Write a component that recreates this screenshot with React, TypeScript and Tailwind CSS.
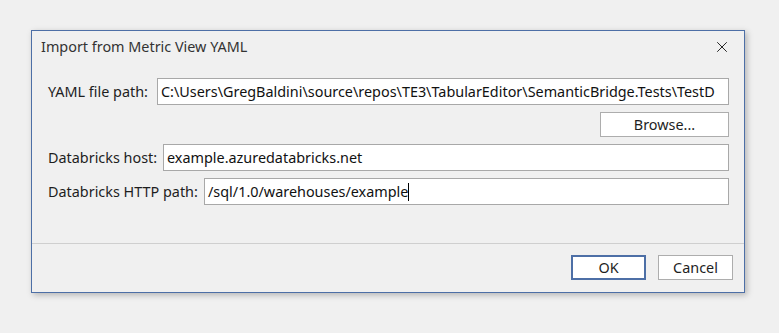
import { X } from 'lucide-react'

const font = { fontFamily: '"Noto Sans", "Open Sans", Arial, sans-serif' }

function Field({ label, labelWidth, value, caret }: { label: string; labelWidth: string; value: string; caret?: boolean }) {
  return (
    <div className="flex items-center h-[27px]">
      <span className={`${labelWidth} shrink-0 whitespace-nowrap text-[14.4px] text-[#1e1e1e]`}>{label}</span>
      <div className="flex-1 min-w-0 h-full bg-white border border-[#a8a8a8] flex items-center pl-[3px] overflow-hidden whitespace-nowrap text-[14.4px] text-[#111]">
        <span>{value}</span>
        {caret && <span className="w-px h-[18px] bg-black shrink-0" />}
      </div>
    </div>
  )
}

export default function App() {
  return (
    <div className="w-[779px] h-[333px] bg-[#f0f0f0] pt-[30px] pl-[31px]" style={font}>
      <div className="w-[714px] h-[263px] border border-[#4d6fa6] bg-[#f0f0f0] shadow-[2px_2px_6px_rgba(0,0,0,0.25)] flex flex-col">
        {/* Title bar */}
        <div className="h-[32px] shrink-0 flex items-center justify-between pl-[9px] pr-[13px]">
          <span className="text-[14.4px] text-[#333]">Import from Metric View YAML</span>
          <X className="w-[18px] h-[18px] text-[#222]" strokeWidth={1.3} />
        </div>

        {/* Fields */}
        <div className="flex flex-col gap-[7px] pt-[15px] pl-[16px] pr-[15px]">
          <Field
            label="YAML file path:"
            labelWidth="w-[109px]"
            value="C:\Users\GregBaldini\source\repos\TE3\TabularEditor\SemanticBridge.Tests\TestD"
          />
          <div className="flex justify-end">
            <button className="w-[129px] h-[25px] bg-white border border-[#adadad] text-[14.4px] text-[#1e1e1e] flex items-center justify-center">
              Browse...
            </button>
          </div>
          <Field label="Databricks host:" labelWidth="w-[115px]" value="example.azuredatabricks.net" />
          <Field label="Databricks HTTP path:" labelWidth="w-[156px]" value="/sql/1.0/warehouses/example" caret />
        </div>

        <div className="flex-1" />

        {/* Footer */}
        <div className="border-t border-[#cfcfcf] h-[49px] shrink-0 flex justify-end items-start gap-[12px] pt-[11px] pr-[11px]">
          <button className="w-[75px] h-[25px] bg-white border-2 border-[#4d6fa6] text-[14.4px] text-[#1e1e1e] flex items-center justify-center">
            OK
          </button>
          <button className="w-[75px] h-[25px] bg-white border border-[#adadad] text-[14.4px] text-[#1e1e1e] flex items-center justify-center">
            Cancel
          </button>
        </div>
      </div>
    </div>
  )
}
